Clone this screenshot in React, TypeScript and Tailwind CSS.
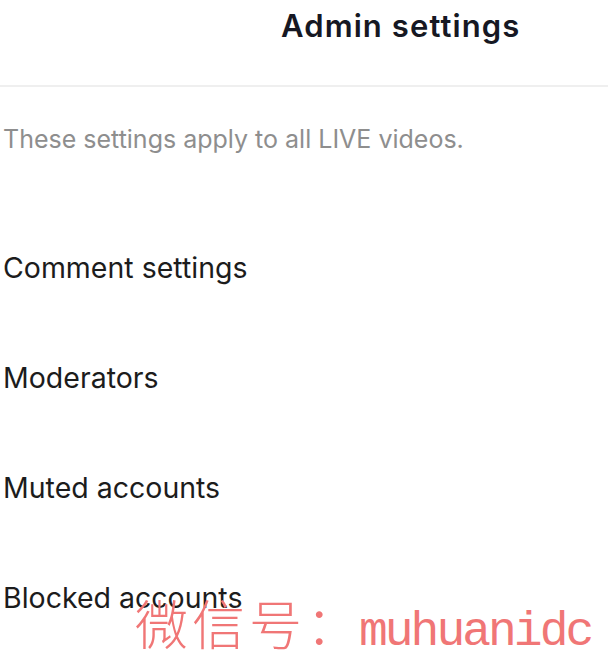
import React from "react";

export default function App() {
  const items = ["Comment settings", "Moderators", "Muted accounts", "Blocked accounts"];
  return (
    <div className="relative w-[608px] h-[665px] bg-white overflow-hidden" style={{ fontFamily: "Inter, 'Noto Sans', sans-serif" }}>
      <div className="h-[87px] border-b-2 border-[#efefef] pl-[281px] pt-[10px]">
        <div className="text-[31px] font-semibold tracking-[1.1px] text-[#161823] leading-none whitespace-nowrap">Admin settings</div>
      </div>
      <div className="pl-[3px] mt-[40px] text-[25px] text-[#8e8e8e] leading-none whitespace-nowrap">These settings apply to all LIVE videos.</div>
      <div className="flex flex-col pl-[3px] mt-[102px]">
        {items.map((t) => (
          <div key={t} className="h-[110px] text-[28.5px] text-[#1c1c1c] leading-none whitespace-nowrap">{t}</div>
        ))}
      </div>
      <div className="absolute left-[135px] top-[596px] flex items-baseline whitespace-nowrap text-[#f07676] leading-none">
        <span className="text-[53px] font-light tracking-[4px]" style={{ fontFamily: "'Noto Sans CJK SC', sans-serif" }}>微信号</span>
        <span className="text-[53px] font-light" style={{ fontFamily: "'Noto Sans CJK SC', sans-serif" }}>：</span>
        <span className="text-[48px] tracking-[-3px]" style={{ fontFamily: "'Liberation Mono', monospace" }}>muhuanidc</span>
      </div>
    </div>
  );
}
